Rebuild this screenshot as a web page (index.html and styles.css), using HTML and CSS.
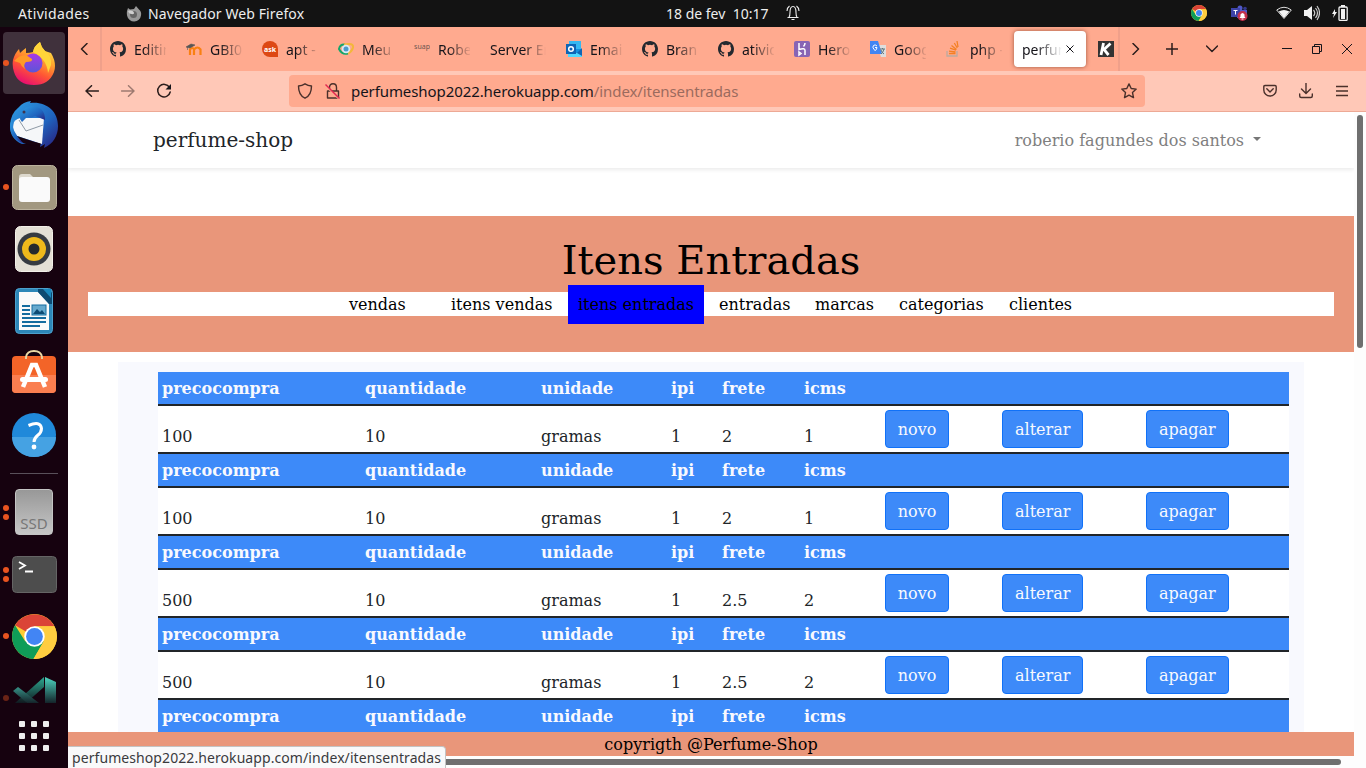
FILE: index.html
```html
<!DOCTYPE html>
<html lang="pt-BR">
<head>
<meta charset="utf-8">
<title>perfume-shop</title>
<link rel="stylesheet" href="styles.css">
</head>
<body>
<svg class="defs" width="0" height="0">
  <defs>
    <linearGradient id="ff" x1=".8" y1="0" x2=".3" y2="1"><stop offset="0" stop-color="#fff44f"/><stop offset=".35" stop-color="#ffa82e"/><stop offset=".65" stop-color="#ff5634"/><stop offset="1" stop-color="#e80b72"/></linearGradient>
    <linearGradient id="ffp" x1="0" y1="0" x2="0" y2="1"><stop offset="0" stop-color="#a838e6"/><stop offset="1" stop-color="#5b56d8"/></linearGradient>
    <linearGradient id="tb" x1="0" y1="0" x2="1" y2="1"><stop offset="0" stop-color="#2fa0e6"/><stop offset=".6" stop-color="#1f63be"/><stop offset="1" stop-color="#291a78"/></linearGradient>
    <linearGradient id="vs" gradientUnits="userSpaceOnUse" x1="0" y1="0" x2="0" y2="27"><stop offset="0" stop-color="#4fdcc6"/><stop offset="1" stop-color="#14242a"/></linearGradient>
    <linearGradient id="vs2" gradientUnits="userSpaceOnUse" x1="0" y1="0" x2="0" y2="27"><stop offset="0" stop-color="#2fae95"/><stop offset="1" stop-color="#10191f"/></linearGradient>
    <symbol id="github" viewBox="0 0 16 16"><path fill="#24292f" d="M8 0C3.58 0 0 3.58 0 8c0 3.54 2.29 6.53 5.47 7.59.4.07.55-.17.55-.38v-1.49c-2.01.37-2.53-.49-2.69-.94-.09-.23-.48-.94-.82-1.13-.28-.15-.68-.52-.01-.53.63-.01 1.08.58 1.23.82.72 1.21 1.87.87 2.33.66.07-.52.28-.87.51-1.07-1.78-.2-3.64-.89-3.64-3.95 0-.87.31-1.59.82-2.15-.08-.2-.36-1.02.08-2.12 0 0 .67-.21 2.2.82a7.6 7.6 0 0 1 4 0c1.53-1.04 2.2-.82 2.2-.82.44 1.1.16 1.92.08 2.12.51.56.82 1.27.82 2.15 0 3.07-1.87 3.75-3.65 3.95.29.25.54.73.54 1.48v2.2c0 .21.15.46.55.38A8 8 0 0 0 16 8c0-4.42-3.58-8-8-8z"/></symbol>
    <symbol id="chrome" viewBox="0 0 44 44"><circle cx="22" cy="22" r="22" fill="#fc3"/><path fill="#db4437" d="M22 22 3 11A22 22 0 0 1 41.5 12H22z"/><path fill="#0f9d58" d="M3 11A22 22 0 0 0 21 44l10-17-9-5-9 5z"/><path fill="#ffcd40" d="M22 12h19.5A22 22 0 0 1 21 44l10-17z"/><circle cx="22" cy="22" r="10" fill="#fff"/><circle cx="22" cy="22" r="8.2" fill="#4285f4"/></symbol>
  </defs>
</svg>

<header class="topbar">
  <span class="activities">Atividades</span>
  <svg class="app-icon" width="16" height="16" viewBox="0 0 16 16"><path fill="#999" d="M1 5l1-3 2 1.500L8 3l2-3 3 3.500C15 5 15.500 7 15 9.500A7 7 0 0 1 1.200 10C.8 8 .7 7 1 5z"/><circle cx="7.500" cy="8.500" r="3.500" fill="#666"/><path d="M2 5c3-1 6 0 6 2S4 8 3 7z" fill="#d0d0d0"/></svg>
  <span class="app-name">Navegador Web Firefox</span>
  <span class="clock">18 de fev&nbsp; 10:17</span>
  <svg class="bell" width="14" height="16" viewBox="0 0 14 16" fill="none" stroke="#eee" stroke-width="1.100"><path d="M1.500 12.500h11M3 12q1-1 1-4.500 0-6 3-6t3 6Q10 11 11 12M1 6c0-2.500 1-4 2.500-5M13 6c0-2.500-1-4-2.500-5M5.500 14.500h3"/></svg>
  <svg class="tray-chrome" width="16" height="16"><use href="#chrome"/></svg>
  <svg class="tray-teams" width="17" height="16" viewBox="0 0 17 16"><circle cx="9" cy="3" r="2.500" fill="#5059c9"/><circle cx="14" cy="3.500" r="1.800" fill="#34398f"/><path d="M6 5h10v8H6z" fill="#5059c9"/><path d="M0 3h9v9H0z" fill="#3d43a8"/><path d="M2.500 5.500h4M4.500 5.500v4" stroke="#fff"/><circle cx="11.500" cy="11" r="5" fill="#c4314b"/><path d="M8.500 13l1-1.500V9.500q2-3 4 0v2l1 1.500zM10.500 13.500h2v1h-2z" fill="#fff"/></svg>
  <svg class="tray-wifi" width="16" height="14" viewBox="0 0 16 14"><path d="M.7 4Q8-1.500 15.300 4L8 12.500z" fill="none" stroke="#ddd"/><path d="M2.700 5.500q5.300-3 10.600 0L8 12z" fill="#f5f5f5"/></svg>
  <svg class="tray-vol" width="16" height="16" viewBox="0 0 16 16"><path fill="#f2f2f2" d="M0 5h3l5-4v14l-5-4H0z"/><path d="M9.500 5q2.500 3 0 6M11.500 3q4 5 0 10M13 1q5 7 0 14" stroke="#ccc" stroke-width="1.200" fill="none"/></svg>
  <svg class="tray-bat" width="16" height="16" viewBox="0 0 16 16"><path fill="#f2f2f2" d="M3 4 0 9h2l-1 4 4-6H3zM9 4h4v10H9zM9 0h4v2H9z"/><rect x="7" y="2" width="8.200" height="13.400" rx="1" fill="none" stroke="#f2f2f2" stroke-width="1.300"/></svg>
</header>

<div class="desktop">
  <nav class="dock">
    <div class="slot active"><i class="dots"><b></b></i>
      <svg width="44" height="46" viewBox="0 0 44 46"><path fill="url(#ff)" d="M1 20Q3 13 7 9l1 4q3-3 6-5l0 5q4 0 7-1Q22 6 28 2q1 5 5 9l6 2q6 10 3 19-5 13-20 13Q6 45 2 32q-2-6-1-12z"/><circle cx="21" cy="23" r="9.500" fill="url(#ffp)"/><path fill="#ff9a28" d="M2 21q5-6 12-6l6 4q1 3-6 3-3 3-1 7-4-3-5-6z"/><path fill="#ffd43a" d="M21 12Q22 6 28 2q1 5 5 9 7 5 6 14l-3 8q-1-14-15-21z"/></svg></div>
    <div class="slot">
      <svg width="48" height="48" viewBox="0 0 48 48"><path fill="url(#tb)" d="M9 6q4-5 12-6l-1 2c16-2 28 8 28 23 0 10-5 18-14 22l1-4-5 3 1-5-19 2Q0 38 0 25 0 13 9 6z"/><path fill="#f5f7f9" d="M4 21q3-4 8-4h22l-2 26L4 34q-2-6 0-13z"/><path d="m9 19 7 11 17-6" stroke="#8d99a5" fill="none"/><path fill="#16020f" d="m4 34 27 9-3 2Q10 44 4 34z"/><path fill="url(#tb)" d="M0 25q0-3 2-7-1 12 11 24Q0 37 0 25z"/><path fill="url(#tb)" d="M10 18q0-11 11-13 14 0 14 14l-10-4q-5 3-8 1l-5 5z"/><circle cx="14" cy="11" r="1.500" fill="#3c3550"/></svg></div>
    <div class="slot"><i class="dots"><b></b></i>
      <svg width="45" height="45" viewBox="0 0 45 45"><rect x=".5" y=".5" width="44" height="44" rx="5" fill="#a29880" stroke="#bbb29d"/><path fill="#ddd9ce" d="M7 12q0-3 3-3h8l4 4v5H7z"/><rect x="7" y="12" width="31" height="25" rx="3" fill="#fafafa"/></svg></div>
    <div class="slot">
      <svg width="38" height="46" viewBox="0 0 38 46"><rect x=".5" y=".5" width="37" height="45" rx="5" fill="#e3dfd5" stroke="#f2f0e9"/><circle cx="19" cy="23" r="16.500" fill="#363b42"/><circle cx="19" cy="23" r="12" fill="#efb91b"/><circle cx="19" cy="23" r="5.500" fill="#262a2d"/></svg></div>
    <div class="slot">
      <svg width="38" height="46" viewBox="0 0 38 46"><rect x=".5" y=".5" width="37" height="45" rx="4" fill="#2d87b8" stroke="#4ca1cd"/><path fill="#fafafa" d="M4 4h19l11 12v26H4z"/><path fill="#0d4a72" d="M23 1h10l4 4v11h-3L23 4z"/><path fill="#1987bd" d="M28 1h8v9z"/><path d="M7 18h8M7 22h8M7 26h8M7 30h24M7 34h24M7 38h18" stroke="#146c9f" stroke-width="2"/><rect x="17" y="17" width="14" height="10" fill="#65a9ce" stroke="#146c9f"/><path d="m18 26 4-5 3 3 2-2 3 4z" fill="#0d4a72"/></svg></div>
    <div class="slot">
      <svg width="46" height="46" viewBox="0 0 46 46"><rect x="1" y="6" width="44" height="37" rx="4" fill="#f36428"/><path d="M1 25h44v14q0 4-4 4H5q-4 0-4-4z" fill="#fa7e50"/><path d="M15 9V7q1-6 8-6t8 6v2" fill="none" stroke="#ead9a5" stroke-width="1.800"/><path d="M12 37 21 15h4l9 22" stroke="#fff" stroke-width="4.500" fill="none"/><rect x="9" y="27" width="28" height="5" rx="2.500" fill="#fff"/></svg></div>
    <div class="slot">
      <svg width="44" height="44" viewBox="0 0 44 44"><circle cx="22" cy="22" r="22" fill="#2089da"/><path d="M0 24a22 20 0 0 0 44 0z" fill="#45a2e3"/><path d="M16.500 12.500q12-5 13 3 0 4-4 7-3.500 3-3.500 6.500" stroke="#fff" stroke-width="3" fill="none"/><circle cx="22" cy="34" r="2.400" fill="#fff"/></svg></div>
    <div class="sep"></div>
    <div class="slot"><i class="dots"><b></b><b></b></i><div class="ssd">SSD</div></div>
    <div class="slot"><i class="dots"><b></b><b></b></i>
      <svg width="45" height="37" viewBox="0 0 45 37"><rect x=".5" y=".5" width="44" height="36" rx="4" fill="#4d4d4d" stroke="#656565"/><path d="m7 6 6 3.500-6 3.500M13 15.500h8" stroke="#fff" stroke-width="1.800" fill="none"/></svg></div>
    <div class="slot"><i class="dots"><b></b></i><svg width="45" height="45"><use href="#chrome"/></svg></div>
    <div class="slot clipped"><i class="dots dim"><b></b></i>
      <svg width="43" height="27" viewBox="0 0 43 27"><path fill="url(#vs2)" d="M31 1v10L13 27H2z"/><path fill="url(#vs)" d="m0 15 5-4 21 16H14z"/><path fill="url(#vs)" d="m32 1 11 5v21H32z"/></svg></div>
    <div class="apps"><b></b><b></b><b></b><b></b><b></b><b></b><b></b><b></b><b></b></div>
  </nav>

  <div class="browser">
    <div class="tabs">
      <div class="scroll-left"><svg width="8" height="12" viewBox="0 0 8 12"><path d="M7 .5 1.500 6 7 11.500" class="ln"/></svg></div>
      <div class="tab"><svg width="16" height="16"><use href="#github"/></svg><span>Editin</span></div>
      <div class="tab"><svg width="16" height="16" viewBox="0 0 16 16"><path d="M4 14V8.500q2.500-3 4 0V14M8 8.500q3.500-4 6.500 0V14" stroke="#f98012" stroke-width="2.200" fill="none"/><path d="m0 6 5-3 4 1-5 3zM1.500 6v3" fill="#555" stroke="#555" stroke-width=".6"/></svg><span>GBI02</span></div>
      <div class="tab"><svg width="16" height="16" viewBox="0 0 16 16"><path d="M16 16H8a8 8 0 1 1 8-8z" fill="#dd4814"/><text x="8" y="10.500" class="ask">ask</text></svg><span>apt - c</span></div>
      <div class="tab"><svg width="16" height="16" viewBox="0 0 16 16"><path d="M7 3.500Q2 3 1 8q3 6 9 4.500" stroke="#14a66b" stroke-width="2" fill="none"/><path d="M6 3.500q10-2 9 3-1 4-5 6" stroke="#f3b73a" stroke-width="2" fill="none"/><circle cx="8" cy="8" r="4.200" fill="#d8ebf4"/><circle cx="8" cy="8" r="2.500" fill="#4c9bcb"/></svg><span>Meu</span></div>
      <div class="tab"><svg width="16" height="16" viewBox="0 0 16 16"><text x="8" y="8" class="suap">suap</text></svg><span>Robe</span></div>
      <div class="tab wide"><span>Server Er</span></div>
      <div class="tab"><svg width="16" height="16" viewBox="0 0 16 16"><path fill="#35b8f1" d="M3 0h12v8H3z"/><path fill="#0a6bbd" d="M3 4h6v9H3z"/><path fill="#1490df" d="M2 8h14v8H2z"/><path fill="#50d9ff" d="M2 12h14v4H2z"/><path fill="#1066b5" d="m11 12 5-5v8z"/><path fill="#0f65b5" d="M0 3h10v10H0z"/><circle cx="5" cy="8" r="2.300" stroke="#fff" stroke-width="1.500" fill="none"/></svg><span>Email</span></div>
      <div class="tab"><svg width="16" height="16"><use href="#github"/></svg><span>Bran</span></div>
      <div class="tab"><svg width="16" height="16"><use href="#github"/></svg><span>ativid</span></div>
      <div class="tab"><svg width="16" height="16" viewBox="0 0 16 16"><rect width="16" height="16" rx="2" fill="#8864b4"/><path d="M5 2v6.500q6-2 6 1V14M11 2q0 2-1.500 3.500M5 11v3l2-1.500z" stroke="#fff" stroke-width="1.500" fill="none"/></svg><span>Hero</span></div>
      <div class="tab"><svg width="16" height="16" viewBox="0 0 16 16"><path fill="#dedede" d="M7 4h9v12h-5z"/><path fill="#4285f4" d="M0 0h8l4 13H0z"/><path d="M7 5Q5 3 3.500 4.500T4 8.500 7 6.500H5" stroke="#fff" fill="none"/><path d="M10 8h5M12.500 7v1M14 8q-1 4-3 5M11 9q1 3 3 4" stroke="#60777e" fill="none"/></svg><span>Goog</span></div>
      <div class="tab"><svg width="16" height="16" viewBox="0 0 16 16"><path d="M1 10v5h10v-5" stroke="#bcaaa0" stroke-width="1.300" fill="none"/><path d="M3 12.500h6.500M3 10.200l6.500.8M4 7.200l6 2M5.500 4.500l5 4M8.300 2l3 5M11 0l1 6" stroke="#f48024" stroke-width="1.300"/></svg><span>php -</span></div>
      <div class="tab current"><span>perfum</span><svg width="8" height="8" viewBox="0 0 8 8"><path d="m.5.5 7 7m0-7-7 7" class="thin"/></svg></div>
      <div class="last-tab"><svg width="16" height="16" viewBox="0 0 16 16"><path fill="#333" d="M0 0h16v16H0z"/><path d="M5.500 2 3 14M12.500 2.500 6 8.500l4.500 5.500" stroke="#fff" stroke-width="2.800" fill="none"/></svg></div>
      <div class="tab-tools">
        <svg width="8" height="12" viewBox="0 0 8 12"><path d="M1 .5 6.500 6 1 11.500" class="ln"/></svg>
        <svg width="12" height="12" viewBox="0 0 12 12"><path d="M6 0v12M0 6h12" class="ln"/></svg>
        <svg width="12" height="8" viewBox="0 0 12 8"><path d="m.5 1 5.500 5.500L11.500 1" class="ln"/></svg>
      </div>
      <div class="win-tools">
        <svg width="10" height="10" viewBox="0 0 10 10"><path d="M0 4.500h10" class="thin"/></svg>
        <svg width="10" height="10" viewBox="0 0 10 10"><path d="M.5 2.500h7v7h-7zM2.500 2.500v-2h7v7h-2" class="thin"/></svg>
        <svg width="10" height="10" viewBox="0 0 10 10"><path d="m0 0 10 10M10 0 0 10" class="thin"/></svg>
      </div>
    </div>

    <div class="toolbar">
      <svg class="back" width="14" height="12" viewBox="0 0 14 12"><path d="M13.500 6H1M6.500.7 1 6l5.500 5.300" class="ln"/></svg>
      <svg class="fwd" width="14" height="12" viewBox="0 0 14 12"><path d="M.5 6H13M7.500.7 13 6l-5.500 5.300" class="ln"/></svg>
      <svg class="reload" width="16" height="16" viewBox="0 0 16 16"><path d="M13.500 4.500A6.300 6.300 0 1 0 14.200 9" class="ln"/><path d="M15 1v5.500H9.500z" fill="#15141a"/></svg>
      <div class="urlbar">
        <svg width="16" height="16" viewBox="0 0 16 16"><path d="M8 .8Q5 2.700 1.500 3c0 6 1.500 10 6.500 12.200C13 13 14.500 9 14.500 3Q11 2.700 8 .8z" class="ln soft"/></svg>
        <svg width="16" height="16" viewBox="0 0 16 16"><path d="M2.500 8h11v7h-11zM4.500 8V4.500q0-3.700 3.500-3.700t3.500 3.700V8" class="ln soft"/><path d="M0 2.500 14 16" stroke="#ffaa8f" stroke-width="1.500"/><path d="m.5 1.500 14 14" stroke="#e22850" stroke-width="1.500"/></svg>
        <span class="url">perfumeshop2022.herokuapp.com<em>/index/itensentradas</em></span>
        <svg class="star" width="16" height="16" viewBox="0 0 16 16"><path d="m8 .9 2.200 4.600 5 .6-3.700 3.500 1 5L8 12.200l-4.500 2.400 1-5L.8 6.100l5-.6z" class="ln soft"/></svg>
      </div>
      <div class="tb-right">
        <svg width="14" height="14" viewBox="0 0 14 14"><path d="M2 1.500h10q1.200 0 1.200 1.200V6A6.200 6 0 0 1 .8 6V2.700Q.8 1.500 2 1.500zM3.800 4.800 7 8l3.200-3.200" class="ln soft"/></svg>
        <svg width="14" height="16" viewBox="0 0 14 16"><path d="M7 0v10M2.500 6 7 10.500 11.500 6M.7 11v2q0 1.500 1.500 1.500h9.600q1.500 0 1.500-1.500v-2" class="ln soft"/></svg>
        <svg width="12" height="12" viewBox="0 0 12 12"><path d="M0 1.500h12M0 6h12M0 10.500h12" class="ln soft"/></svg>
      </div>
    </div>

    <div class="view">
      <div class="page">
        <div class="navbar"><span class="brand">perfume-shop</span><span class="user">roberio fagundes dos santos</span></div>
        <div class="hero">
          <h1>Itens Entradas</h1>
          <div class="menu">
            <a class="m1">vendas</a><a class="m2">itens vendas</a><a class="m3">itens entradas</a><a class="m4">entradas</a><a class="m5">marcas</a><a class="m6">categorias</a><a class="m7">clientes</a>
          </div>
        </div>
        <div class="panel">
          <table>
            <colgroup><col class="c1"><col class="c2"><col class="c3"><col class="c4"><col class="c5"><col class="c6"><col class="c7"><col class="c8"><col class="c9"></colgroup>
            <tbody>
            <tr class="h"><th>precocompra</th><th>quantidade</th><th>unidade</th><th>ipi</th><th>frete</th><th>icms</th><th></th><th></th><th></th></tr>
            <tr><td>100</td><td>10</td><td>gramas</td><td>1</td><td>2</td><td>1</td><td><button class="new">novo</button></td><td><button>alterar</button></td><td><button>apagar</button></td></tr>
            <tr class="h"><th>precocompra</th><th>quantidade</th><th>unidade</th><th>ipi</th><th>frete</th><th>icms</th><th></th><th></th><th></th></tr>
            <tr><td>100</td><td>10</td><td>gramas</td><td>1</td><td>2</td><td>1</td><td><button class="new">novo</button></td><td><button>alterar</button></td><td><button>apagar</button></td></tr>
            <tr class="h"><th>precocompra</th><th>quantidade</th><th>unidade</th><th>ipi</th><th>frete</th><th>icms</th><th></th><th></th><th></th></tr>
            <tr><td>500</td><td>10</td><td>gramas</td><td>1</td><td>2.5</td><td>2</td><td><button class="new">novo</button></td><td><button>alterar</button></td><td><button>apagar</button></td></tr>
            <tr class="h"><th>precocompra</th><th>quantidade</th><th>unidade</th><th>ipi</th><th>frete</th><th>icms</th><th></th><th></th><th></th></tr>
            <tr><td>500</td><td>10</td><td>gramas</td><td>1</td><td>2.5</td><td>2</td><td><button class="new">novo</button></td><td><button>alterar</button></td><td><button>apagar</button></td></tr>
            <tr class="h"><th>precocompra</th><th>quantidade</th><th>unidade</th><th>ipi</th><th>frete</th><th>icms</th><th></th><th></th><th></th></tr>
            </tbody>
          </table>
        </div>
        <footer class="copy">copyrigth @Perfume-Shop</footer>
      </div>
      <div class="vscroll"><b></b></div>
      <div class="hscroll"><b></b></div>
      <div class="status"><span>perfumeshop2022.herokuapp.com/index/itensentradas</span></div>
    </div>
  </div>
</div>
</body>
</html>
```
FILE: styles.css
```css
* { box-sizing: border-box; }
body { margin: 0; width: 1366px; height: 768px; overflow: hidden; display: flex; flex-direction: column; font-family: "Noto Sans", sans-serif; color: #15141a; background: #16020f; }
svg { flex: none; display: block; }
.defs { position: absolute; }
.ln { fill: none; stroke: #2b1d1c; stroke-width: 1.5; stroke-linejoin: round; stroke-linecap: round; }
.ln.soft { stroke: #4a302b; stroke-width: 1.4; }
.thin { fill: none; stroke: #15141a; stroke-width: 1; }
.ask { font: 700 7px "Noto Sans", sans-serif; fill: #fff; text-anchor: middle; }
.suap { font: 7px "Noto Sans", sans-serif; fill: #6d5650; text-anchor: middle; }

/* system bar */
.topbar { height: 27px; flex: none; background: #131313; color: #eee; display: flex; align-items: center; font-size: 14px; white-space: nowrap; }
.activities { margin-left: 18px; width: 108px; letter-spacing: .35px; }
.app-name { margin-left: 6px; width: 519px; letter-spacing: .1px; }
.clock { width: 120px; margin-top: -1px; margin-left: -1px; }
.bell { margin-right: 391px; margin-top: -2px; }
.tray-teams { margin-left: 24px; }
.tray-wifi { margin-left: 28px; }
.tray-vol { margin-left: 12px; }
.tray-bat { margin-left: 12px; }
.tray-wifi, .tray-vol, .tray-bat, .tray-chrome, .tray-teams { margin-top: -1px; }

.desktop { display: flex; flex: 1; min-height: 0; }

/* launcher */
.dock { width: 68px; flex: none; padding-top: 5px; background: #16020f; display: flex; flex-direction: column; }
.slot { height: 62px; flex: none; margin: 0 3px; display: flex; align-items: center; justify-content: center; border-radius: 4px; position: relative; }
.slot.active { background: #40313c; }
.dots { position: absolute; left: 0; top: 0; height: 100%; display: flex; flex-direction: column; gap: 3px; justify-content: center; }
.dots b { width: 6px; height: 6px; border-radius: 50%; background: #e95420; }
.dots.dim { opacity: .4; height: 62px; }
.sep { height: 1px; margin: 7px 10px; flex: none; background: #59505a; }
.ssd { width: 38px; height: 46px; border-radius: 4px; border: 1px solid #c4c4c4; background: linear-gradient(#989898, #c6c6c6); color: #777; font-size: 15px; line-height: 20px; padding-top: 23px; text-align: center; }
.slot.clipped { height: 36px; align-items: flex-end; }
.apps { flex: none; width: 30px; margin: 18px 0 0 19px; display: grid; grid-template-columns: repeat(3, 6px); gap: 6px; }
.apps b { width: 6px; height: 6px; border-radius: 1px; background: #eee; }

/* browser chrome */
.browser { flex: 1; min-width: 0; display: flex; flex-direction: column; }
.tabs { height: 44px; flex: none; background: #ffaa8f; display: flex; align-items: center; font-size: 14px; }
.scroll-left { width: 34px; height: 44px; padding-left: 12px; margin-right: 8px; display: flex; align-items: center; border-right: 2px solid #f0a08a; }
.tab { width: 76px; flex: none; display: flex; align-items: center; gap: 8px; }
.tab span { width: 32px; overflow: hidden; white-space: nowrap; -webkit-mask-image: linear-gradient(90deg, #000 30%, rgba(0, 0, 0, .08)); mask-image: linear-gradient(90deg, #000 30%, rgba(0, 0, 0, .08)); }
.tab.wide span { width: 56px; -webkit-mask-image: linear-gradient(90deg, #000 60%, transparent); mask-image: linear-gradient(90deg, #000 60%, transparent); }
.tab.current { width: 72px; height: 36px; margin-left: -8px; padding-left: 8px; background: #fff; border-radius: 4px; box-shadow: 0 0 4px rgba(90, 30, 10, .6); gap: 4px; }
.tab.current span { width: 40px; -webkit-mask-image: linear-gradient(90deg, #000 35%, transparent); mask-image: linear-gradient(90deg, #000 35%, transparent); }
.last-tab { width: 34px; height: 44px; padding-left: 12px; display: flex; align-items: center; border-right: 2px solid #f0a08a; }
.tab-tools { margin-left: 12px; display: flex; align-items: center; gap: 28px; }
.tab-tools svg:nth-child(2) { margin-left: -2px; }
.win-tools { margin-left: auto; margin-right: 14px; display: flex; gap: 20px; }
.toolbar { height: 41px; flex: none; background: #ffc8b7; border-bottom: 1px solid #eda995; display: flex; align-items: center; }
.back { margin-left: 17px; }
.fwd { margin-left: 22px; opacity: .45; }
.reload { margin-left: 21px; }
.urlbar { margin-left: 117px; width: 856px; height: 32px; border-radius: 4px; background: #ffaa8f; display: flex; align-items: center; padding: 0 8px; gap: 12px; font-size: 15px; }
.url { margin-left: -2px; letter-spacing: -.08px; white-space: nowrap; }
.url em { font-style: normal; color: #9b6b5e; }
.star { margin-left: auto; }
.tb-right { margin-left: auto; margin-right: 18px; display: flex; align-items: center; gap: 22px; }
.tb-right svg:last-child { margin-left: 1px; }

/* page */
.view { flex: 1; min-height: 0; display: grid; grid-template-columns: 1286px 12px; grid-template-rows: 644px 12px; position: relative; background: #fff; }
.page { overflow: hidden; background: #fff; font-family: "DejaVu Serif", serif; font-size: 16px; line-height: 24px; color: #212529; position: relative; }
.navbar { height: 56px; padding: 0 93px 0 85px; display: flex; align-items: center; justify-content: space-between; box-shadow: 0 2px 4px rgba(0, 0, 0, .08); }
.brand { font-size: 20px; }
.user { color: #7f7f7f; display: flex; align-items: center; gap: 9px; padding-top: 2px; }
.user::after { content: ""; border: 4.5px solid transparent; border-top-color: #777; border-bottom: 0; margin-top: -5px; }
.hero { margin-top: 48px; height: 136px; padding: 20px 20px 0; background: #e9967a; color: #000; }
h1 { margin: 0 0 8px; font-size: 40px; line-height: 48px; font-weight: 400; text-align: center; }
.menu { height: 24px; background: #fff; display: flex; align-items: center; padding-left: 261px; white-space: nowrap; }
.menu a { flex: none; padding-top: 2px; }
.m1 { width: 102px; }
.m2 { width: 117px; }
.menu .m3 { width: 136px; height: 39px; margin-top: 1px; padding: 8px 10px 0; background: #00f; }
.m4 { width: 96px; margin-left: 15px; }
.m5 { width: 84px; }
.m6 { width: 110px; }
.panel { margin: 10px 50px 0; height: 400px; padding: 10px 15px 0 40px; background: #f8f9fe; }
table { width: 1131px; table-layout: fixed; border-collapse: separate; border-spacing: 0; background: #fff; }
.c1 { width: 203px; } .c2 { width: 176px; } .c3 { width: 130px; } .c4 { width: 51px; } .c5 { width: 82px; } .c6 { width: 81px; } .c7 { width: 117px; } .c8 { width: 144px; } .c9 { width: 147px; }
th, td { padding: 5px 4px 3px; border-bottom: 2px solid #212529; text-align: left; }
th { height: 34px; background: #3d8af9; color: #f8f9fe; font-weight: 700; }
td { height: 48px; vertical-align: bottom; }
td:nth-child(n+7) { padding: 4px; }
button { display: block; height: 38px; padding: 1px 12px 0; border: 1px solid #1071f8; border-radius: 4px; background: #3d8af9; color: #f8f9fe; font: inherit; }
button.new { width: 64px; padding: 1px 0 0; }
.copy { position: absolute; left: 0; right: 0; bottom: 0; height: 24px; padding-top: 1px; line-height: 23px; background: #e9967a; color: #000; text-align: center; }
.vscroll { grid-column: 2; grid-row: 1; padding: 3px 3px 0 3px; background: #fdfdfd; }
.vscroll b { display: block; width: 6px; height: 233px; border-radius: 3px; background: #6f6f6f; }
.hscroll { grid-column: 1 / 3; grid-row: 2; padding: 3px 0 0 3px; background: #fdfdfd; }
.hscroll b { display: block; width: 1270px; height: 6px; border-radius: 3px; background: #6f6f6f; }
.status { position: absolute; left: 0; bottom: 0; height: 22px; width: 378px; padding-left: 4px; font-size: 14px; line-height: 22px; letter-spacing: .08px; background: #f9f9fa; border: 1px solid #c3c3c3; border-left: 0; border-bottom: 0; border-top-right-radius: 4px; color: #3a3a3d; white-space: nowrap; }
```
